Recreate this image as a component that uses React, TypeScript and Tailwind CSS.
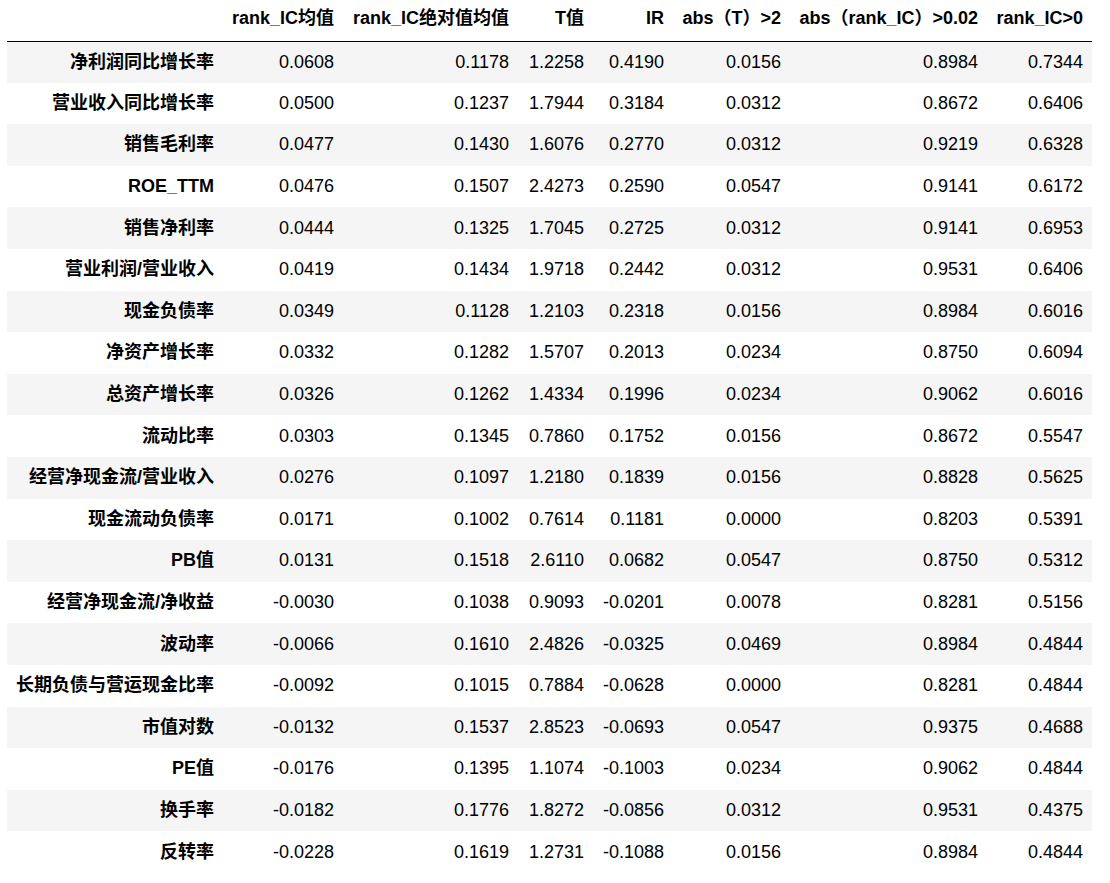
const columns = [
  "rank_IC均值",
  "rank_IC绝对值均值",
  "T值",
  "IR",
  "abs（T）>2",
  "abs（rank_IC）>0.02",
  "rank_IC>0",
];

const widths = ["w-[120px]", "w-[175px]", "w-[75px]", "w-[80px]", "w-[117px]", "w-[197px]", "w-[105px]"];

const rows: [string, string[]][] = [
  ["净利润同比增长率", ["0.0608", "0.1178", "1.2258", "0.4190", "0.0156", "0.8984", "0.7344"]],
  ["营业收入同比增长率", ["0.0500", "0.1237", "1.7944", "0.3184", "0.0312", "0.8672", "0.6406"]],
  ["销售毛利率", ["0.0477", "0.1430", "1.6076", "0.2770", "0.0312", "0.9219", "0.6328"]],
  ["ROE_TTM", ["0.0476", "0.1507", "2.4273", "0.2590", "0.0547", "0.9141", "0.6172"]],
  ["销售净利率", ["0.0444", "0.1325", "1.7045", "0.2725", "0.0312", "0.9141", "0.6953"]],
  ["营业利润/营业收入", ["0.0419", "0.1434", "1.9718", "0.2442", "0.0312", "0.9531", "0.6406"]],
  ["现金负债率", ["0.0349", "0.1128", "1.2103", "0.2318", "0.0156", "0.8984", "0.6016"]],
  ["净资产增长率", ["0.0332", "0.1282", "1.5707", "0.2013", "0.0234", "0.8750", "0.6094"]],
  ["总资产增长率", ["0.0326", "0.1262", "1.4334", "0.1996", "0.0234", "0.9062", "0.6016"]],
  ["流动比率", ["0.0303", "0.1345", "0.7860", "0.1752", "0.0156", "0.8672", "0.5547"]],
  ["经营净现金流/营业收入", ["0.0276", "0.1097", "1.2180", "0.1839", "0.0156", "0.8828", "0.5625"]],
  ["现金流动负债率", ["0.0171", "0.1002", "0.7614", "0.1181", "0.0000", "0.8203", "0.5391"]],
  ["PB值", ["0.0131", "0.1518", "2.6110", "0.0682", "0.0547", "0.8750", "0.5312"]],
  ["经营净现金流/净收益", ["-0.0030", "0.1038", "0.9093", "-0.0201", "0.0078", "0.8281", "0.5156"]],
  ["波动率", ["-0.0066", "0.1610", "2.4826", "-0.0325", "0.0469", "0.8984", "0.4844"]],
  ["长期负债与营运现金比率", ["-0.0092", "0.1015", "0.7884", "-0.0628", "0.0000", "0.8281", "0.4844"]],
  ["市值对数", ["-0.0132", "0.1537", "2.8523", "-0.0693", "0.0547", "0.9375", "0.4688"]],
  ["PE值", ["-0.0176", "0.1395", "1.1074", "-0.1003", "0.0234", "0.9062", "0.4844"]],
  ["换手率", ["-0.0182", "0.1776", "1.8272", "-0.0856", "0.0312", "0.9531", "0.4375"]],
  ["反转率", ["-0.0228", "0.1619", "1.2731", "-0.1088", "0.0156", "0.8984", "0.4844"]],
];

export default function App() {
  return (
    <div className="bg-white w-[1110px] h-[883px] pl-[7px] font-['Liberation_Sans','Noto_Sans_CJK_SC',sans-serif] text-[18px] text-black">
      <table className="table-fixed border-collapse w-[1085px]">
        <colgroup>
          <col className="w-[216px]" />
          {widths.map((w, i) => (
            <col key={i} className={w} />
          ))}
        </colgroup>
        <thead>
          <tr className="h-[41px] border-b border-black">
            <th className="p-0"></th>
            {columns.map((c) => (
              <th key={c} className="px-[9px] pb-[9px] pt-0 align-bottom text-right font-bold whitespace-nowrap">
                {c}
              </th>
            ))}
          </tr>
        </thead>
        <tbody>
          {rows.map(([name, vals], i) => (
            <tr key={name} className={i % 2 === 0 ? "h-[41.6px] bg-[#f5f5f5]" : "h-[41.6px]"}>
              <th className="px-[9px] py-0 text-right font-bold whitespace-nowrap align-middle">{name}</th>
              {vals.map((v, j) => (
                <td key={j} className="px-[9px] py-0 text-right whitespace-nowrap align-middle">
                  {v}
                </td>
              ))}
            </tr>
          ))}
        </tbody>
      </table>
    </div>
  );
}
